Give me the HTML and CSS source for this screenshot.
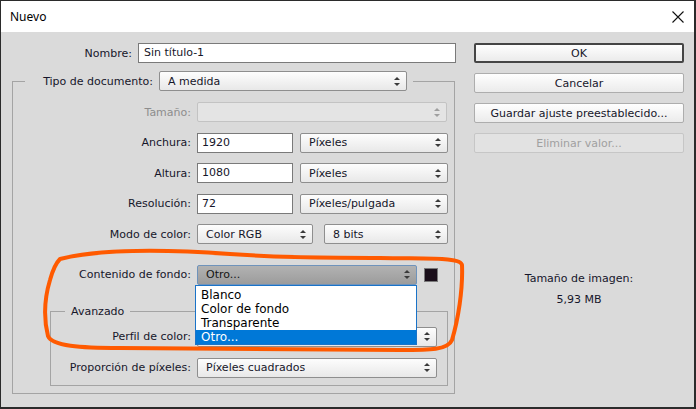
FILE: index.html
```html
<!DOCTYPE html>
<html lang="es">
<head>
    <meta charset="UTF-8">
    <title>Nuevo</title>
    <link rel="stylesheet" href="styles.css">
</head>
<body>
    <div class="window">
        <div class="titlebar">
            <span class="title">Nuevo</span>
            <svg class="close" width="12" height="12" viewBox="0 0 12 12">
                <path d="M0.5 0.5 L11.5 11.5 M11.5 0.5 L0.5 11.5" stroke="#111" stroke-width="1.1" fill="none"/>
            </svg>
        </div>

        <div class="content">
            <div class="main">
                <div class="name-row">
                    <label>Nombre:</label>
                    <div class="input name">Sin título-1</div>
                </div>

                <fieldset class="group outer">
                    <legend>
                        <div class="legend-row">
                            <label>Tipo de documento:</label>
                            <div class="select doc-type"><span>A medida</span><i class="arrows"></i></div>
                        </div>
                    </legend>

                    <div class="rows">
                        <div class="row">
                            <label class="disabled-text">Tamaño:</label>
                            <div class="select full disabled"><span></span><i class="arrows"></i></div>
                        </div>
                        <div class="row">
                            <label>Anchura:</label>
                            <div class="input num">1920</div>
                            <div class="select unit"><span>Píxeles</span><i class="arrows"></i></div>
                        </div>
                        <div class="row">
                            <label>Altura:</label>
                            <div class="input num">1080</div>
                            <div class="select unit"><span>Píxeles</span><i class="arrows"></i></div>
                        </div>
                        <div class="row">
                            <label>Resolución:</label>
                            <div class="input num">72</div>
                            <div class="select unit"><span>Píxeles/pulgada</span><i class="arrows"></i></div>
                        </div>
                        <div class="row">
                            <label>Modo de color:</label>
                            <div class="select mode"><span>Color RGB</span><i class="arrows"></i></div>
                            <div class="select bits"><span>8 bits</span><i class="arrows"></i></div>
                        </div>
                        <div class="row bg-row">
                            <label>Contenido de fondo:</label>
                            <div class="dropdown">
                                <div class="select open"><span>Otro...</span><i class="arrows"></i></div>
                                <ul class="list">
                                    <li>Blanco</li>
                                    <li>Color de fondo</li>
                                    <li>Transparente</li>
                                    <li class="selected">Otro...</li>
                                </ul>
                            </div>
                            <div class="swatch"></div>
                        </div>
                    </div>

                    <fieldset class="group advanced">
                        <legend>Avanzado</legend>
                        <div class="rows adv-rows">
                            <div class="row">
                                <label>Perfil de color:</label>
                                <div class="select wide"><span></span><i class="arrows"></i></div>
                            </div>
                            <div class="row">
                                <label>Proporción de píxeles:</label>
                                <div class="select wide"><span>Píxeles cuadrados</span><i class="arrows"></i></div>
                            </div>
                        </div>
                    </fieldset>
                </fieldset>
            </div>

            <div class="side">
                <div class="buttons">
                    <div class="btn default">OK</div>
                    <div class="btn">Cancelar</div>
                    <div class="btn">Guardar ajuste preestablecido...</div>
                    <div class="btn disabled">Eliminar valor...</div>
                </div>
                <div class="size-info">
                    <div>Tamaño de imagen:</div>
                    <div class="size-value">5,93 MB</div>
                </div>
            </div>
        </div>

        <!-- marca a mano sobre la captura -->
        <svg class="annotation" width="696" height="409" viewBox="0 0 696 409">
            <path d="M60 259 C100 249, 160 249, 230 254 C300 259, 330 257, 380 258 C430 259, 461 257, 462 265 C463 290, 458 320, 452 340 C448 350, 430 350, 400 350 C300 350, 200 348, 120 348 C80 348, 52 346, 48 336 C44 320, 44 300, 50 280 C53 269, 57 262, 60 259 Z"
                  fill="none" stroke="#ff5a00" stroke-width="4" stroke-linecap="round" stroke-linejoin="round"/>
        </svg>
    </div>
</body>
</html>
```

FILE: styles.css
```css
body {
    margin: 0;
    font-family: "DejaVu Sans", Tahoma, sans-serif;
    font-size: 11px;
    color: #16162a;
    background: #dadada;
}
.window {
    position: relative;
    width: 696px;
    height: 409px;
    box-sizing: border-box;
    border: 1px solid #2b2b2b;
    border-right-width: 2px;
    border-bottom-width: 2px;
    background: #dadada;
    overflow: hidden;
}
.titlebar {
    height: 31px;
    background: #fff;
    display: flex;
    align-items: center;
    justify-content: space-between;
    padding: 0 9px 0 9px;
}
.title {
    font-family: "Noto Sans", "Open Sans", sans-serif;
    font-size: 12px;
    color: #000;
}
.close {
    display: block;
    margin-right: 1px;
}
.content {
    display: flex;
    padding: 11px 0 0 11px;
}
.main {
    width: 444px;
}
.name-row {
    display: flex;
    align-items: center;
    gap: 6px;
    height: 20px;
}
.name-row label {
    width: 120px;
    text-align: right;
}
.input {
    height: 20px;
    box-sizing: border-box;
    border: 1px solid #7a7a7a;
    background: #fff;
    padding: 0 4px;
    line-height: 18px;
    white-space: nowrap;
}
.input.name {
    width: 318px;
    padding-left: 5px;
}
.input.num {
    width: 96px;
}

/* grupos */
.group {
    margin: 0;
    padding: 0;
    border: 1px solid #a4a4a4;
    min-width: 0;
}
.outer {
    margin-top: 8px;
    width: 443px;
    box-sizing: border-box;
    padding-bottom: 7px;
}
.outer > legend {
    margin-left: 12px;
    padding: 0 6px 0 0;
}
.legend-row {
    display: flex;
    align-items: center;
    gap: 6px;
}
.legend-row label {
    width: 128px;
    text-align: right;
}
.rows {
    display: flex;
    flex-direction: column;
    gap: 10.5px;
    padding-top: 11px;
}
.row {
    display: flex;
    align-items: center;
    gap: 6px;
    height: 20px;
}
.row > label {
    width: 178px;
    flex: none;
    text-align: right;
    white-space: nowrap;
}
.disabled-text {
    color: #8d8d8d;
}
.bg-row {
    margin-top: 10px;
}

/* selects */
.select {
    position: relative;
    height: 20px;
    box-sizing: border-box;
    border: 1px solid #8e8e8e;
    border-radius: 2px;
    background: linear-gradient(#fdfdfd, #e8e8e8);
    display: flex;
    align-items: center;
    justify-content: space-between;
    padding: 0 6px 0 8px;
    white-space: nowrap;
    overflow: hidden;
}
.select span {
    overflow: hidden;
}
.arrows {
    flex: none;
    width: 7px;
    height: 9px;
    display: flex;
    flex-direction: column;
    justify-content: space-between;
    align-items: center;
}
.arrows::before,
.arrows::after {
    content: "";
    width: 0;
    height: 0;
    border-left: 3px solid transparent;
    border-right: 3px solid transparent;
}
.arrows::before {
    border-bottom: 3px solid #3a3a3a;
}
.arrows::after {
    border-top: 3px solid #3a3a3a;
}
.doc-type {
    width: 248px;
}
.full {
    width: 250px;
}
.select.disabled {
    background: #e4e4e4;
    border-color: #c3c3c3;
}
.select.disabled .arrows {
    opacity: 0.4;
}
.unit {
    width: 148px;
    margin-left: 1px;
}
.mode {
    width: 116px;
}
.bits {
    width: 124px;
    margin-left: 5px;
}
.dropdown {
    position: relative;
    width: 220px;
}
.select.open {
    width: 220px;
    background: linear-gradient(#b2b2b2, #9c9c9c);
    border-color: #6f93bb;
    color: #151515;
}
.list {
    position: absolute;
    top: 20px;
    left: -2px;
    width: 222px;
    box-sizing: border-box;
    margin: 0;
    padding: 2px 0 0;
    list-style: none;
    background: #fff;
    border: 1px solid #1a73c8;
    z-index: 2;
}
.list li {
    height: 14px;
    line-height: 14px;
    padding-left: 5px;
    font-size: 12px;
    color: #000;
}
.list li.selected {
    background: #0078d7;
    color: #fff;
}
.swatch {
    width: 14px;
    height: 14px;
    box-sizing: border-box;
    margin-left: 1px;
    background: #1b0f1b;
    border: 1px solid #7a7a7a;
}

/* avanzado */
.advanced {
    margin: 20px 6px 0 37px;
    padding-bottom: 7px;
}
.advanced > legend {
    margin-left: 14px;
    padding: 0 6px;
    line-height: 14px;
}
.adv-rows {
    gap: 11px;
    padding-top: 8px;
}
.adv-rows .row > label {
    width: 140px;
}
.wide {
    width: 240px;
}

/* columna derecha */
.side {
    width: 210px;
    margin-left: 18px;
}
.buttons {
    display: flex;
    flex-direction: column;
    gap: 10px;
}
.btn {
    height: 20px;
    box-sizing: border-box;
    border: 1px solid #adadad;
    border-radius: 2px;
    background: linear-gradient(#fefefe, #ebebeb);
    display: flex;
    align-items: center;
    justify-content: center;
}
.btn.default {
    border: 2px solid #454545;
}
.btn.disabled {
    color: #a0a0a0;
    background: #e2e2e2;
    border-color: #c6c6c6;
}
.size-info {
    margin-top: 119px;
    text-align: center;
    line-height: 14px;
}
.size-value {
    margin-top: 7px;
}

.annotation {
    position: absolute;
    top: -1px;
    left: -1px;
    pointer-events: none;
    z-index: 5;
}
```
